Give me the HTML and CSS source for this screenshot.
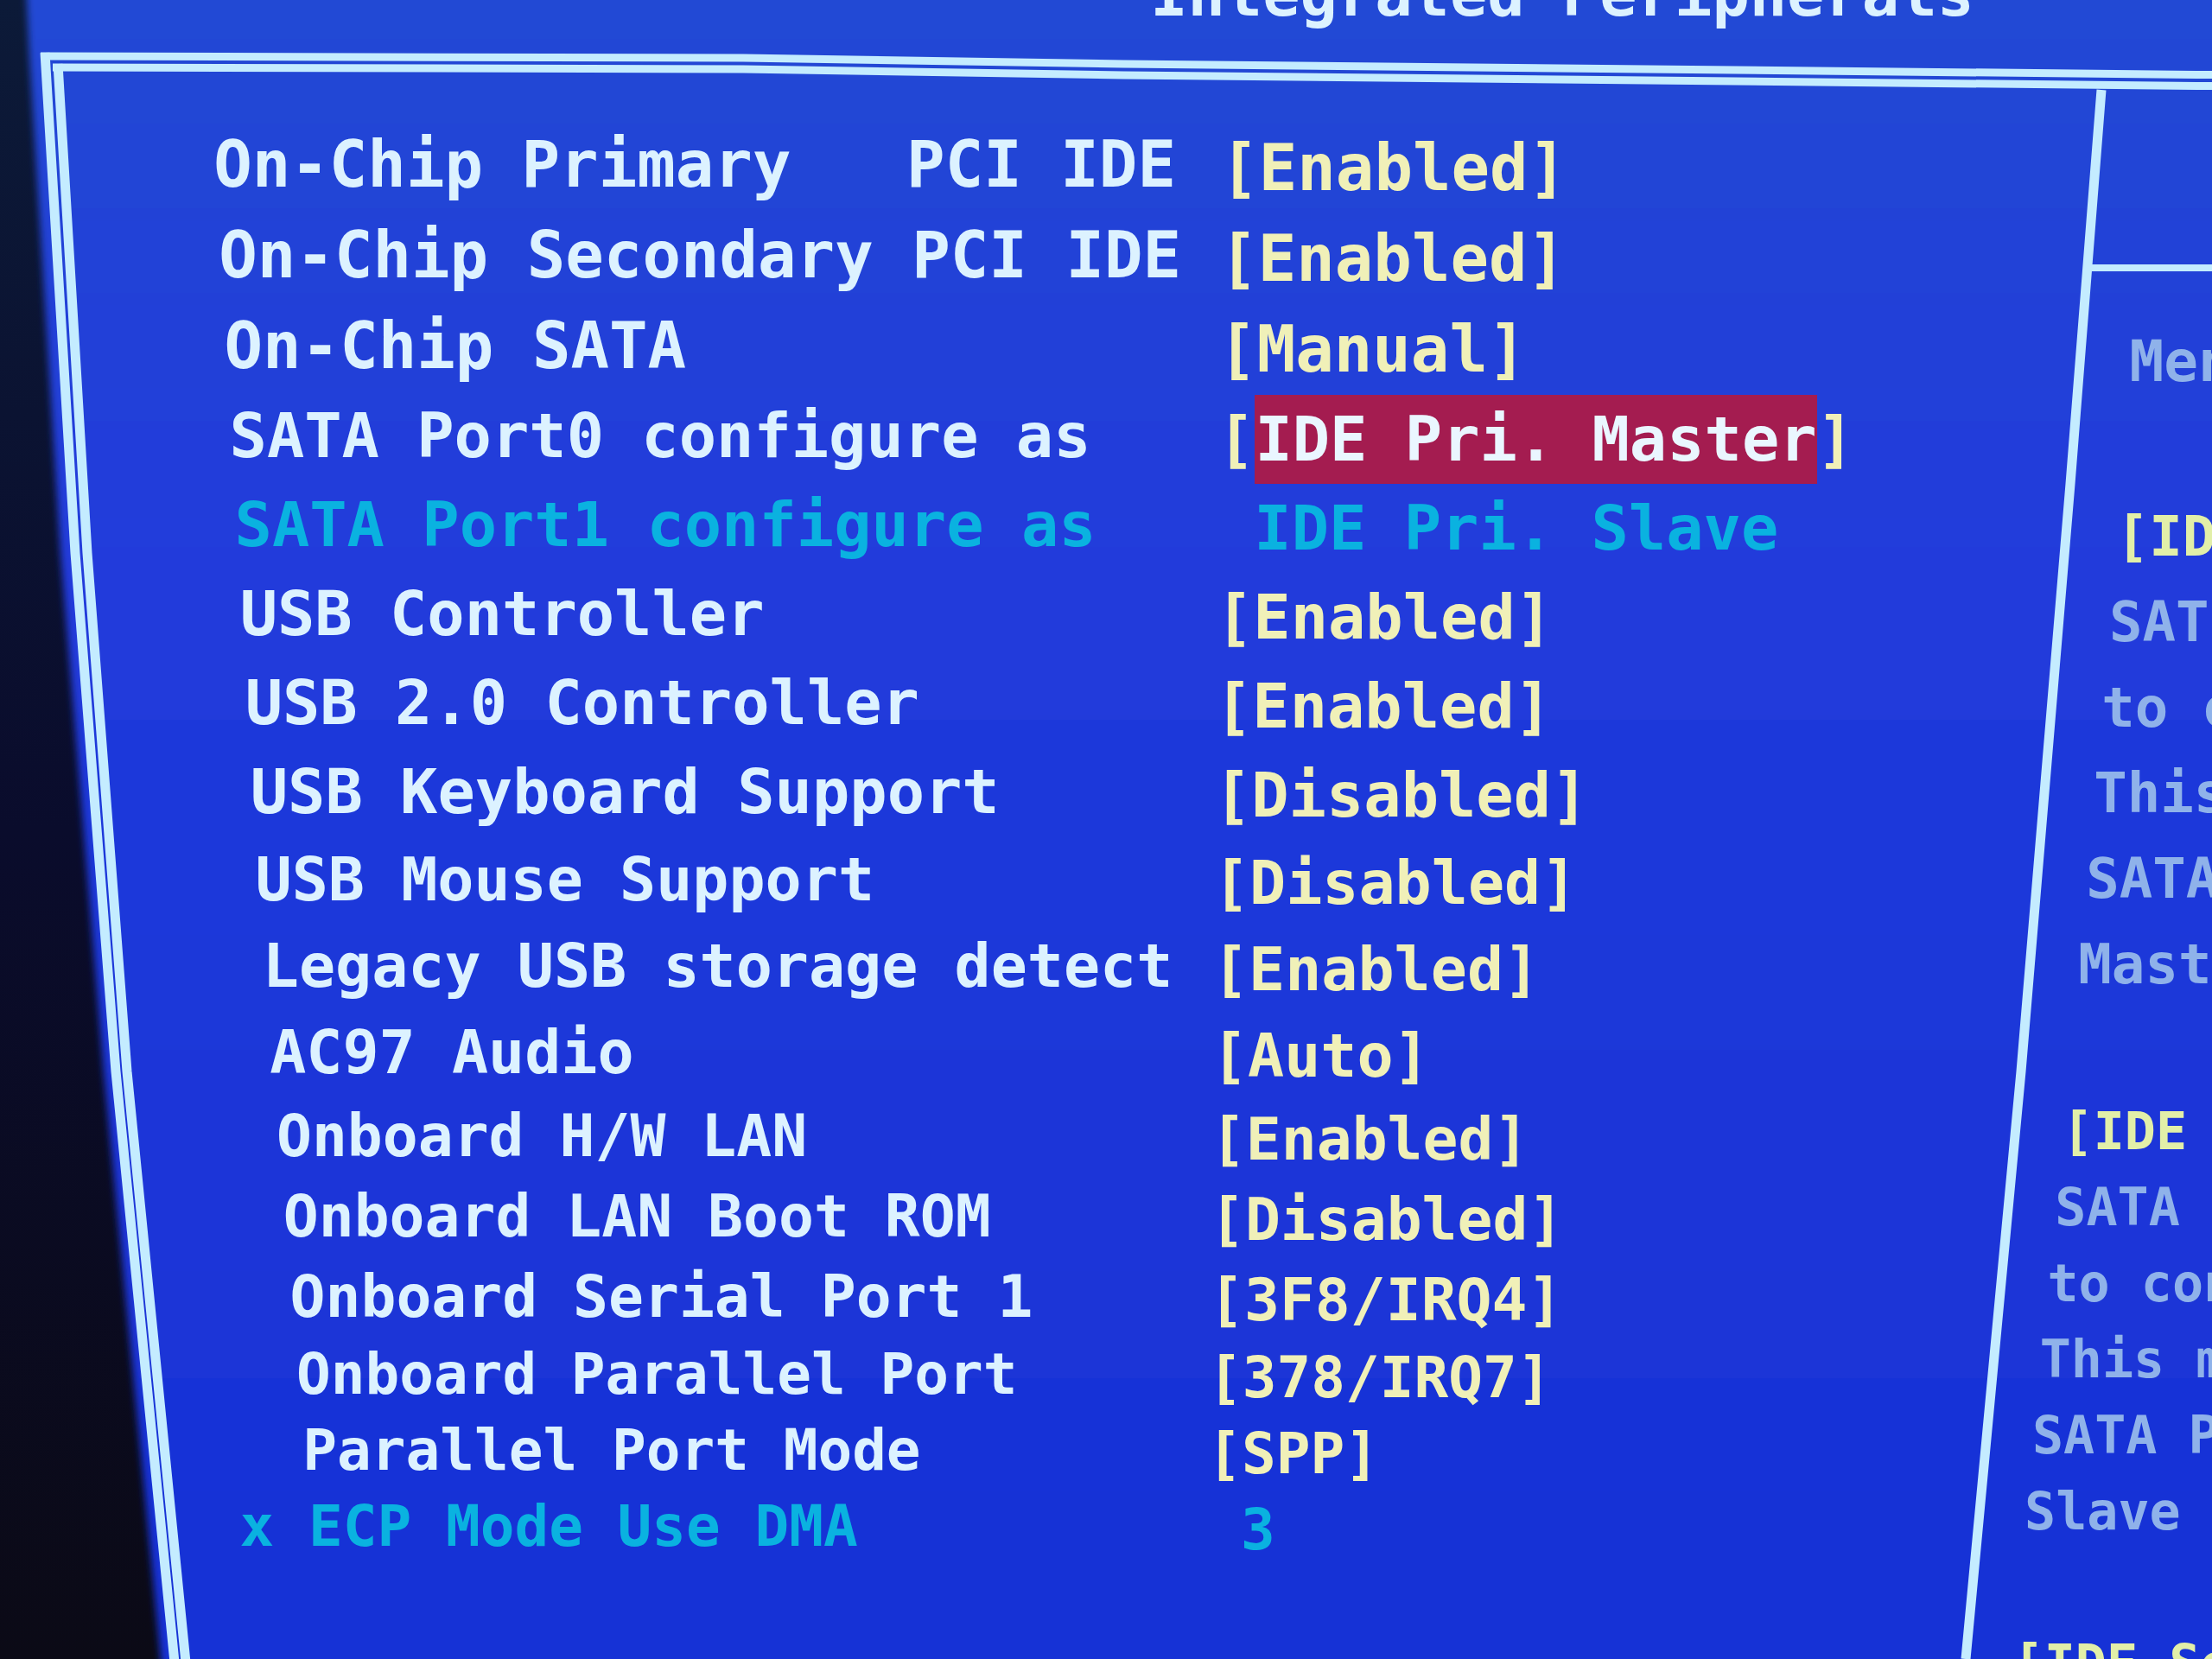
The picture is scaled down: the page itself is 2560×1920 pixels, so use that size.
FILE: index.html
```html
<!DOCTYPE html>
<html lang="en">
<head>
    <meta charset="UTF-8">
    <title>Integrated Peripherals</title>
    <link rel="stylesheet" href="styles.css">
</head>
<body>
<div class="screen">
    <!-- tube area and the border lines -->
    <svg class="frame" viewBox="0 0 2560 1920" preserveAspectRatio="none" aria-hidden="true">
        <defs>
            <linearGradient id="blue" x1="0" y1="0" x2="0" y2="1">
                <stop offset="0" stop-color="#2449d4"/>
                <stop offset="0.35" stop-color="#213bdb"/>
                <stop offset="1" stop-color="#1731d6"/>
            </linearGradient>
            <filter id="soft" x="-5%" y="-5%" width="110%" height="110%">
                <feGaussianBlur stdDeviation="4"/>
            </filter>
        </defs>
        <path d="M30 -20 L34 65 L70 640 L120 1240 L188 1940 H2600 V-20 Z" fill="url(#blue)" filter="url(#soft)"/>
        <g fill="none" stroke="#c4ecff">
            <path d="M2600 87 L1300 74 L860 67 L47 65" stroke-width="9"/>
            <path d="M2600 100 L1300 87 L860 80 L61 78" stroke-width="9"/>
            <path d="M52 61 L87 640 L134 1240 L202 1924" stroke-width="11"/>
            <path d="M67 74 L101 640 L147 1240 L215 1924" stroke-width="11"/>
            <path d="M2432 104 L2396 560 L2339 1240 L2275 1920" stroke-width="11"/>
            <path d="M2416 310 H2560" stroke-width="8"/>
        </g>
    </svg>

    <header>
        <h1>Integrated Peripherals</h1>
    </header>

    <main>
        <div class="labels">
            <div class="edge"></div>
            <ul class="size1">
                <li><label for="pri">On-Chip Primary   PCI IDE</label></li>
                <li><label for="sec">On-Chip Secondary PCI IDE</label></li>
                <li><label for="sata">On-Chip SATA</label></li>
            </ul>
            <ul class="size2">
                <li><label for="port0">SATA Port0 configure as</label></li>
                <li class="off"><label for="port1">SATA Port1 configure as</label></li>
                <li><label for="usb">USB Controller</label></li>
                <li><label for="usb2">USB 2.0 Controller</label></li>
                <li><label for="kbd">USB Keyboard Support</label></li>
            </ul>
            <ul class="size3">
                <li><label for="mouse">USB Mouse Support</label></li>
                <li><label for="legacy">Legacy USB storage detect</label></li>
                <li><label for="audio">AC97 Audio</label></li>
            </ul>
            <ul class="size4">
                <li><label for="lan">Onboard H/W LAN</label></li>
                <li><label for="rom">Onboard LAN Boot ROM</label></li>
                <li><label for="serial">Onboard Serial Port 1</label></li>
            </ul>
            <ul class="size5">
                <li><label for="parallel">Onboard Parallel Port</label></li>
                <li><label for="mode">Parallel Port Mode</label></li>
                <li class="off marked"><label for="dma">x ECP Mode Use DMA</label></li>
            </ul>
        </div>

        <div class="values">
            <div class="edge"></div>
            <ul class="size1">
                <li>[<button id="pri">Enabled</button>]</li>
                <li>[<button id="sec">Enabled</button>]</li>
                <li>[<button id="sata">Manual</button>]</li>
            </ul>
            <ul class="size2">
                <li>[<button id="port0" class="active">IDE Pri. Master</button>]</li>
                <li class="off"> <button id="port1" disabled>IDE Pri. Slave</button></li>
                <li>[<button id="usb">Enabled</button>]</li>
                <li>[<button id="usb2">Enabled</button>]</li>
                <li>[<button id="kbd">Disabled</button>]</li>
            </ul>
            <ul class="size3">
                <li>[<button id="mouse">Disabled</button>]</li>
                <li>[<button id="legacy">Enabled</button>]</li>
                <li>[<button id="audio">Auto</button>]</li>
            </ul>
            <ul class="size4">
                <li>[<button id="lan">Enabled</button>]</li>
                <li>[<button id="rom">Disabled</button>]</li>
                <li>[<button id="serial">3F8/IRQ4</button>]</li>
            </ul>
            <ul class="size5">
                <li>[<button id="parallel">378/IRQ7</button>]</li>
                <li>[<button id="mode">SPP</button>]</li>
                <li class="off"> <button id="dma" disabled>3</button></li>
            </ul>
        </div>

        <aside>
            <div class="edge"></div>
            <div class="help1">
                <p>Men</p>
            </div>
            <div class="help2">
                <h2>[ID</h2>
                <p>SAT</p>
                <p>to c</p>
                <p>This</p>
                <p>SATA</p>
                <p>Mast</p>
            </div>
            <div class="help3">
                <h2>[IDE</h2>
                <p>SATA</p>
                <p>to con</p>
                <p>This m</p>
                <p>SATA P</p>
                <p>Slave</p>
            </div>
            <div class="help3">
                <h2>[IDE Se</h2>
            </div>
        </aside>
    </main>
</div>
</body>
</html>
```
FILE: styles.css
```css
* {
    box-sizing: border-box;
    margin: 0;
    padding: 0;
}

body {
    background: #080b20;
    color: #dcf2ff;
    font-family: "DejaVu Sans Mono", "Liberation Mono", monospace;
    font-weight: bold;
}

.screen {
    position: relative;
    height: 100vh;
    overflow: hidden;
    background: linear-gradient(#0c1a38, #0a0c2c 50%, #0b0a16);
}

.frame {
    position: absolute;
    left: 0;
    top: 0;
    width: 100%;
    height: 100%;
}

header {
    position: relative;
    margin-top: -47px;
    padding-left: 52%;
}

h1 {
    font-size: 72px;
    line-height: 80px;
    white-space: nowrap;
}

main {
    position: relative;
    display: grid;
    grid-template-columns: 54.5% 1fr 9%;
    padding-top: 105px;
}

ul {
    list-style: none;
}

li,
h2,
p {
    white-space: pre;
}

/* the columns lean with the tube, text runs along the edge */
.edge {
    float: left;
}

.labels .edge {
    width: 357px;
    height: 1760px;
    shape-outside: polygon(0 0, 241px 0, 296px 937px, 357px 1664px, 357px 1760px, 0 1760px);
}

.values {
    padding-top: 4px;
    color: #f0f0b8;
}

.values .edge {
    width: 17px;
    height: 1700px;
    shape-outside: polygon(0 0, 17px 0, 0 1700px);
}

aside {
    padding-top: 230px;
    color: #8fb2ea;
}

aside .edge {
    width: 135px;
    height: 1500px;
    shape-outside: polygon(0 0, 135px 0, 111px 308px, 75px 707px, 48px 992px, 13px 1342px, 0 1500px);
}

.size1 {
    font-size: 74px;
    line-height: 105px;
}

.size2 {
    font-size: 72px;
    line-height: 103px;
}

.size3 {
    font-size: 70px;
    line-height: 100px;
}

.size4 {
    font-size: 68px;
    line-height: 93px;
}

.size5 {
    font-size: 66px;
    line-height: 88px;
}

button {
    border: 0;
    background: none;
    color: inherit;
    font: inherit;
    cursor: pointer;
}

.active {
    background: #a41c50;
    color: #eaf6ff;
}

.off {
    color: #0ab2e0;
}

.marked {
    text-indent: -2ch;
}

h2 {
    color: #e2efa8;
    font-size: inherit;
}

.help1 {
    font-size: 66px;
    line-height: 102px;
    padding-bottom: 102px;
}

.help2 {
    font-size: 64px;
    line-height: 99px;
    padding-bottom: 99px;
}

.help3 {
    font-size: 60px;
    line-height: 88px;
    padding-bottom: 88px;
}
```
